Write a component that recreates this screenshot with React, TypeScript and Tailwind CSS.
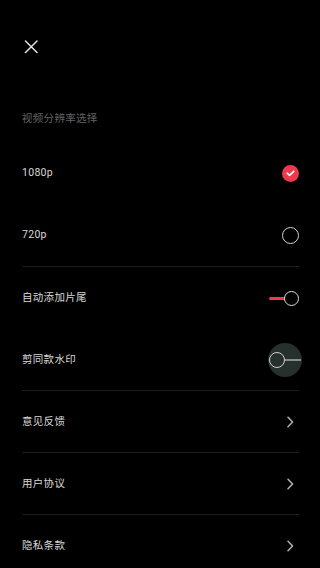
import { ReactNode } from "react";

const font = { fontFamily: 'Roboto, "Noto Sans CJK SC", sans-serif' };

function CheckOn() {
  return (
    <span className="flex h-[17px] w-[17px] items-center justify-center rounded-full bg-[#ee3a4e]">
      <svg width="9" height="7" viewBox="0 0 9 7" fill="none">
        <path d="M1.2 3.2 L3.6 5.4 L7.8 1.4" stroke="#fff" strokeWidth="1.6" strokeLinecap="round" strokeLinejoin="round" />
      </svg>
    </span>
  );
}

function CheckOff() {
  return <span className="block h-[17px] w-[17px] rounded-full border-[1.5px] border-[#d6d6d6]" />;
}

function Toggle({ on }: { on: boolean }) {
  if (on) {
    return (
      <span className="relative block h-[15px] w-[30px]">
        <span className="absolute left-0 right-[14px] top-[6px] h-[3px] rounded-l-full bg-[#ee3a4e]" />
        <span className="absolute right-0 top-0 h-[15px] w-[15px] rounded-full border-[1.5px] border-[#dcdcdc]" />
      </span>
    );
  }
  return (
    <span className="relative -mr-[2px] block h-[16px] w-[32px]">
      <span className="absolute left-[-1px] top-[-9px] h-[34px] w-[34px] rounded-full bg-[#26302c]" />
      <span className="absolute left-[16px] right-0 top-[7px] h-[2px] bg-[#8a8a8a]" />
      <span className="absolute left-0 top-0 h-[16px] w-[16px] rounded-full border-[1.5px] border-[#d0d0d0]" />
    </span>
  );
}

function Chevron() {
  return (
    <svg width="17" height="12" viewBox="0 0 17 12" fill="none">
      <path d="M6 1.2 L10.6 6 L6 10.8" stroke="#b4b4b4" strokeWidth="1.5" strokeLinecap="round" strokeLinejoin="round" />
    </svg>
  );
}

function Row({ label, h, children }: { label: string; h: string; children: ReactNode }) {
  return (
    <div className={`flex items-center justify-between ${h}`}>
      <span className="text-[10.5px] leading-[14px] tracking-[0.3px] text-[#d8d8d8]">{label}</span>
      <span className="flex w-[17px] items-center justify-center">{children}</span>
    </div>
  );
}

export default function App() {
  return (
    <div className="min-h-screen overflow-hidden bg-black pl-[22px] pr-[21px]" style={font}>
      <div className="pt-[40px]">
        <svg width="16" height="14" viewBox="0 0 16 14" fill="none" className="ml-[1px]">
          <path d="M2.5 1 L14 12.5 M14 1 L2.5 12.5" stroke="#e2e2e2" strokeWidth="1.5" strokeLinecap="round" />
        </svg>
      </div>

      <div className="mt-[58px] text-[10.5px] leading-[14px] tracking-[0.3px] text-[#636363]">视频分辨率选择</div>

      <div className="mt-[16px]">
        <Row label="1080p" h="h-[62px]"><CheckOn /></Row>
        <Row label="720p" h="h-[62px]"><CheckOff /></Row>
      </div>

      <div className="border-t border-[#1e1e1e]">
        <Row label="自动添加片尾" h="h-[62px]"><span className="-ml-[13px]"><Toggle on /></span></Row>
        <Row label="剪同款水印" h="h-[61px]"><span className="-ml-[13px]"><Toggle on={false} /></span></Row>
      </div>

      <div className="border-t border-[#1e1e1e]">
        <Row label="意见反馈" h="h-[61px]"><Chevron /></Row>
      </div>
      <div className="border-t border-[#1e1e1e]">
        <Row label="用户协议" h="h-[61px]"><Chevron /></Row>
      </div>
      <div className="border-t border-[#1e1e1e]">
        <Row label="隐私条款" h="h-[61px]"><Chevron /></Row>
      </div>
    </div>
  );
}
